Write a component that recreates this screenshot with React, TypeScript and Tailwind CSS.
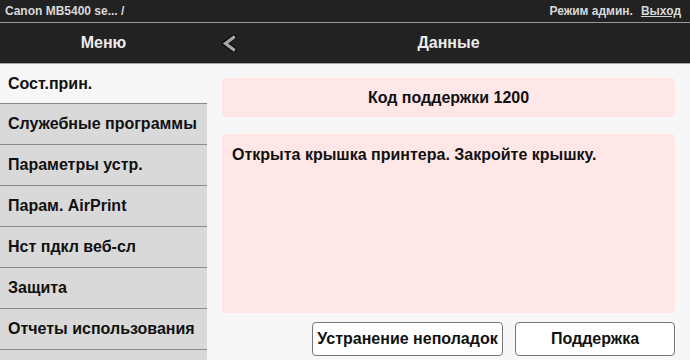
import React from "react";

const items = [
  "Служебные программы",
  "Параметры устр.",
  "Парам. AirPrint",
  "Нст пдкл веб-сл",
  "Защита",
  "Отчеты использования",
];

export default function App() {
  return (
    <div className="w-[690px] h-[360px] overflow-hidden flex flex-col bg-[#f7f7f7] font-['Liberation_Sans',Arial,sans-serif]">
      <div className="h-[23px] shrink-0 bg-[#222222] border-b border-[#9a9a9a] flex items-center justify-between pl-[5px] pr-[9px] text-[12px] font-bold text-[#d8d8d8]">
        <span>Canon MB5400 se... /</span>
        <span className="flex gap-[8px]">
          <span>Режим админ.</span>
          <span className="underline">Выход</span>
        </span>
      </div>
      <div className="h-[41px] shrink-0 bg-[#222222] border-b border-[#a8a8a8] flex items-center text-[16px] font-bold text-[#ececec]">
        <div className="w-[207px] text-center">Меню</div>
        <div className="flex-1 relative flex items-center justify-center">
          <svg className="absolute left-[13px] top-1/2 -translate-y-1/2" width="18" height="18" viewBox="0 0 18 18">
            <polyline points="14,3 5,9.5 14,16" fill="none" stroke="#0e0e0e" strokeWidth="5.5" strokeLinecap="round" strokeLinejoin="round" />
            <polyline points="13.5,3.5 5.5,9.5 13.5,15.5" fill="none" stroke="#a8a8a8" strokeWidth="3.2" strokeLinecap="square" strokeLinejoin="miter" />
          </svg>
          <span>Данные</span>
        </div>
      </div>
      <div className="flex flex-1 min-h-0">
        <div className="w-[207px] shrink-0 bg-[#d9d9d9] flex flex-col text-[16px] font-bold text-[#111]">
          <div className="h-[40px] shrink-0 bg-[#f7f7f7] border-b border-[#8a8a8a] flex items-center pl-[8px]">Сост.прин.</div>
          {items.map((t) => (
            <div key={t} className="h-[41px] shrink-0 border-b border-[#8a8a8a] flex items-center pl-[8px]">{t}</div>
          ))}
        </div>
        <div className="flex-1 flex flex-col px-[15px] pt-[14px] text-[16px] font-bold text-[#111]">
          <div className="h-[39px] rounded-[4px] bg-[#ffe7e7] flex items-center justify-center">Код поддержки 1200</div>
          <div className="h-[179px] mt-[17px] rounded-[4px] bg-[#ffe7e7] pl-[10px] pt-[11px] leading-[19px]">Открыта крышка принтера. Закройте крышку.</div>
          <div className="mt-[9px] flex justify-end gap-[12px]">
            <button className="w-[191px] h-[34px] rounded-[4px] border border-[#777] bg-white font-bold text-[16px] text-[#111]">Устранение неполадок</button>
            <button className="w-[160px] h-[34px] rounded-[4px] border border-[#777] bg-white font-bold text-[16px] text-[#111]">Поддержка</button>
          </div>
        </div>
      </div>
    </div>
  );
}
